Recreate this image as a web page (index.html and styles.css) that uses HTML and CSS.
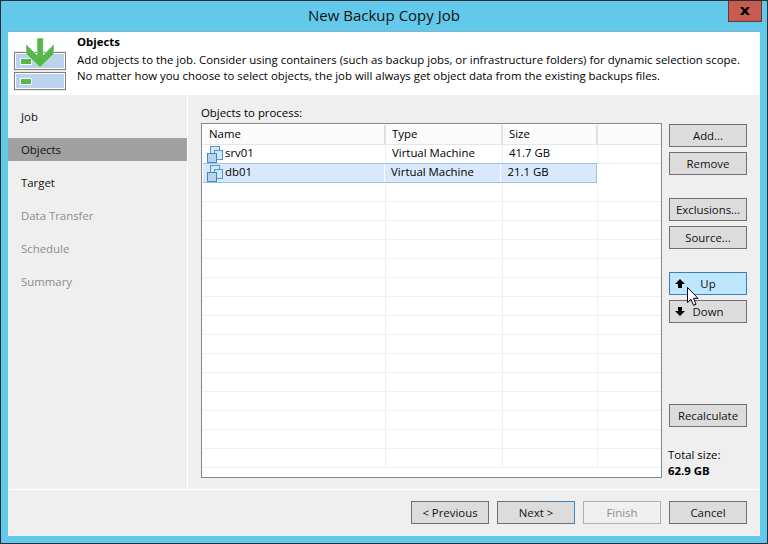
FILE: index.html
```html
<!DOCTYPE html>
<html lang="en">
<head>
    <meta charset="UTF-8">
    <title>New Backup Copy Job</title>
    <link rel="stylesheet" href="styles.css">
</head>
<body>
    <div class="window">
        <div class="titlebar">
            <div class="title">New Backup Copy Job</div>
            <div class="close-btn">
                <svg width="10" height="8" viewBox="0 0 10 8"><path d="M0 0h3l2 2.300 2-2.300h3l-3.300 4 3.300 4h-3l-2-2.300-2 2.300h-3l3.300-4z" fill="#000"/></svg>
            </div>
        </div>
        <div class="client">
            <div class="header">
                <svg class="header-icon" width="52" height="53" viewBox="0 0 52 53">
                    <rect x="0.500" y="14.500" width="51" height="17" fill="#b9d3ec" stroke="#808080" stroke-width="1.300"/>
                    <rect x="1.500" y="15.500" width="49" height="15" fill="none" stroke="#fff"/>
                    <rect x="0.500" y="34.500" width="51" height="17" fill="#b9d3ec" stroke="#808080" stroke-width="1.300"/>
                    <rect x="1.500" y="35.500" width="49" height="15" fill="none" stroke="#fff"/>
                    <rect x="6.500" y="20.500" width="11" height="6" fill="#55b848" stroke="#fff"/>
                    <rect x="6.500" y="40.500" width="11" height="6" fill="#55b848" stroke="#fff"/>
                    <path d="M23 0h6.300v17l10.700-11v10l-14 13.500-14-13.500v-10l11 11z" fill="#55b848" stroke="#fff" stroke-width="0.500"/>
                </svg>
                <div class="header-text">
                    <h1>Objects</h1>
                    <p>Add objects to the job. Consider using containers (such as backup jobs, or infrastructure folders) for dynamic selection scope.</p>
                    <p>No matter how you choose to select objects, the job will always get object data from the existing backups files.</p>
                </div>
            </div>
            <div class="main">
                <div class="sidebar">
                    <div class="step">Job</div>
                    <div class="step active">Objects</div>
                    <div class="step">Target</div>
                    <div class="step off">Data Transfer</div>
                    <div class="step off">Schedule</div>
                    <div class="step off">Summary</div>
                </div>
                <div class="content">
                    <div class="list-area">
                        <div class="list-label">Objects to process:</div>
                        <div class="list">
                            <div class="row head">
                                <div class="col-name">Name</div>
                                <div class="col-type">Type</div>
                                <div class="col-size">Size</div>
                            </div>
                            <div class="row">
                                <div class="col-name"><svg class="vm-icon" width="16" height="17" viewBox="0 0 16 17"><use href="#vm"/></svg>srv01</div>
                                <div class="col-type">Virtual Machine</div>
                                <div class="col-size">41.7 GB</div>
                            </div>
                            <div class="row selected">
                                <div class="col-name"><svg class="vm-icon" width="16" height="17" viewBox="0 0 16 17"><use href="#vm"/></svg>db01</div>
                                <div class="col-type">Virtual Machine</div>
                                <div class="col-size">21.1 GB</div>
                            </div>
                            <div class="row"><div class="col-name"></div><div class="col-type"></div><div class="col-size"></div></div>
                            <div class="row"><div class="col-name"></div><div class="col-type"></div><div class="col-size"></div></div>
                            <div class="row"><div class="col-name"></div><div class="col-type"></div><div class="col-size"></div></div>
                            <div class="row"><div class="col-name"></div><div class="col-type"></div><div class="col-size"></div></div>
                            <div class="row"><div class="col-name"></div><div class="col-type"></div><div class="col-size"></div></div>
                            <div class="row"><div class="col-name"></div><div class="col-type"></div><div class="col-size"></div></div>
                            <div class="row"><div class="col-name"></div><div class="col-type"></div><div class="col-size"></div></div>
                            <div class="row"><div class="col-name"></div><div class="col-type"></div><div class="col-size"></div></div>
                            <div class="row"><div class="col-name"></div><div class="col-type"></div><div class="col-size"></div></div>
                            <div class="row"><div class="col-name"></div><div class="col-type"></div><div class="col-size"></div></div>
                            <div class="row"><div class="col-name"></div><div class="col-type"></div><div class="col-size"></div></div>
                            <div class="row"><div class="col-name"></div><div class="col-type"></div><div class="col-size"></div></div>
                            <div class="row"><div class="col-name"></div><div class="col-type"></div><div class="col-size"></div></div>
                            <div class="row"><div class="col-name"></div><div class="col-type"></div><div class="col-size"></div></div>
                            <div class="row"><div class="col-name"></div><div class="col-type"></div><div class="col-size"></div></div>
                        </div>
                    </div>
                    <div class="actions">
                        <button class="btn">Add...</button>
                        <button class="btn gap-s">Remove</button>
                        <button class="btn gap-l">Exclusions...</button>
                        <button class="btn gap-s">Source...</button>
                        <button class="btn gap-l hover arrow-btn">
                            <svg class="arrow" width="10" height="9" viewBox="0 0 10 9"><path d="M5 0l5 5h-3v4h-4v-4h-3z" fill="#000"/></svg>Up
                        </button>
                        <button class="btn gap-s arrow-btn">
                            <svg class="arrow" width="10" height="9" viewBox="0 0 10 9"><path d="M5 9l5-5h-3v-4h-4v4h-3z" fill="#000"/></svg>Down
                        </button>
                        <button class="btn recalc">Recalculate</button>
                        <div class="total">Total size:<br><b>62.9 GB</b></div>
                    </div>
                </div>
            </div>
            <div class="footer">
                <button class="btn">&lt; Previous</button>
                <button class="btn default">Next &gt;</button>
                <button class="btn disabled">Finish</button>
                <button class="btn">Cancel</button>
            </div>
        </div>
    </div>

    <svg class="cursor" width="14" height="21" viewBox="0 0 14 21"><path d="M1.500 1.500v15l3.500-3.200 2.500 6 2.500-1-2.500-6h4.500z" fill="#fff" stroke="#000" stroke-width="1"/></svg>

    <svg width="0" height="0" class="defs">
        <defs>
            <g id="vm">
                <rect x="3.500" y="0.500" width="9" height="9" fill="#d6e6f4" stroke="#4f9bcf"/>
                <rect x="7.500" y="4.500" width="8" height="9" fill="#d6e6f4" stroke="#4f9bcf"/>
                <rect x="0.500" y="7.500" width="9" height="9" fill="#b9d3ec" stroke="#3a8cc6"/>
            </g>
        </defs>
    </svg>
</body>
</html>
```

FILE: styles.css
```css
* {
    box-sizing: border-box;
}
html, body {
    margin: 0;
    padding: 0;
}
body {
    width: 768px;
    height: 544px;
    overflow: hidden;
    font-family: "Open Sans", "Noto Sans", Arial, sans-serif;
    font-size: 11.4px;
    color: #000;
    background: #63c9ea;
}
.window {
    width: 768px;
    height: 544px;
    display: flex;
    flex-direction: column;
    background: #63c9ea;
    border: 1px solid #2b2f33;
    padding: 0 7px 7px 7px;
}
.titlebar {
    height: 30px;
    flex: none;
    display: flex;
    justify-content: center;
    align-items: center;
    padding-bottom: 2px;
    position: relative;
}
.title {
    font-size: 15px;
    color: #111;
}
.close-btn {
    position: absolute;
    top: 0;
    right: -2px;
    width: 34px;
    height: 21px;
    background: #c75b50;
    border: 1px solid #5e3a3a;
    border-top: none;
    display: flex;
    align-items: center;
    justify-content: center;
}
.client {
    flex: 1;
    display: flex;
    flex-direction: column;
    background: #efefef;
    min-height: 0;
    border-top: 1px solid #7fb4cc;
}
.header {
    height: 63px;
    flex: none;
    display: flex;
    background: #fff;
}
.header-icon {
    flex: none;
    margin: 6px 0 0 6px;
}
.header-text {
    margin-left: 11px;
    padding-top: 2px;
    line-height: 16px;
}
.header-text h1 {
    margin: 0 0 2px 0;
    font-size: 11.4px;
    font-weight: 700;
}
.header-text p {
    margin: 0;
}
.main {
    flex: 1;
    display: flex;
    min-height: 0;
    border-bottom: 1px solid #fff;
}
.sidebar {
    width: 180px;
    flex: none;
    padding-top: 10px;
    border-right: 1px solid #fff;
}
.step {
    height: 23px;
    margin-bottom: 10px;
    padding-left: 13px;
    line-height: 23px;
    color: #111;
}
.step.active {
    background: #a0a0a0;
}
.step.off {
    color: #8c8c8c;
}
.content {
    flex: 1;
    display: flex;
    min-width: 0;
    padding: 10px 13px 0 13px;
}
.list-area {
    width: 461px;
    flex: none;
}
.list-label {
    height: 18px;
    line-height: 15px;
}
.list {
    height: 355px;
    background: #fff;
    border: 1px solid #828790;
    padding: 1px 0 0 1px;
    overflow: hidden;
}
.row {
    display: flex;
    height: 19px;
    line-height: 18px;
    border-bottom: 1px solid #f0f0f0;
}
.row > div {
    border-right: 1px solid #f0f0f0;
    padding-left: 6px;
    padding-bottom: 2px;
    white-space: nowrap;
    display: flex;
    align-items: center;
}
.col-name { width: 183px; }
.col-type { width: 117px; }
.col-size { width: 95px; }
.row.head {
    height: 20px;
    background: #fbfbfb;
    border-bottom: 1px solid #e6e6e6;
}
.row.head > div {
    border-right-color: #e0e0e0;
    border-right-width: 2px;
}
.row.selected {
    width: 394px;
    background: #d9e9fb;
    border-top: 1px solid #9dc2e3;
    border-bottom: 1px solid #9dc2e3;
    border-right: 1px solid #9dc2e3;
    margin-top: -1px;
    height: 20px;
}
.row.selected > div {
    border-right-color: #fff;
}
.row.selected > .col-size {
    border-right: none;
}
.row > .col-name:has(.vm-icon) {
    padding-left: 4px;
}
.vm-icon {
    flex: none;
    margin-right: 2px;
    margin-top: 2px;
}
.actions {
    width: 78px;
    flex: none;
    margin-left: 7px;
    padding-top: 19px;
    display: flex;
    flex-direction: column;
}
.btn {
    height: 23px;
    width: 78px;
    flex: none;
    padding: 0 0 1px 0;
    font: inherit;
    color: #111;
    background: #dcdcdc;
    border: 1px solid #707070;
    border-radius: 0;
}
.gap-s {
    margin-top: 5px;
}
.gap-l {
    margin-top: 23px;
}
.arrow-btn {
    position: relative;
}
.arrow {
    position: absolute;
    left: 5px;
    top: 6px;
}
.btn.hover {
    background: #bee6fd;
    border-color: #3c7fb1;
}
.recalc {
    margin-top: 81px;
}
.total {
    margin-top: 20px;
    line-height: 16px;
    margin-left: -1px;
}
.footer {
    height: 46px;
    flex: none;
    display: flex;
    justify-content: flex-end;
    gap: 8px;
    padding: 11px 13px 0 0;
}
.btn.default {
    border-image: linear-gradient(45deg, #707070 60%, #3c86c0 85%) 1;
}
.btn.disabled {
    background: #f0f0f0;
    border-color: #adb2b5;
    color: #8d8d8d;
}
.cursor {
    position: absolute;
    left: 686px;
    top: 286px;
}
.defs {
    position: absolute;
}
```
